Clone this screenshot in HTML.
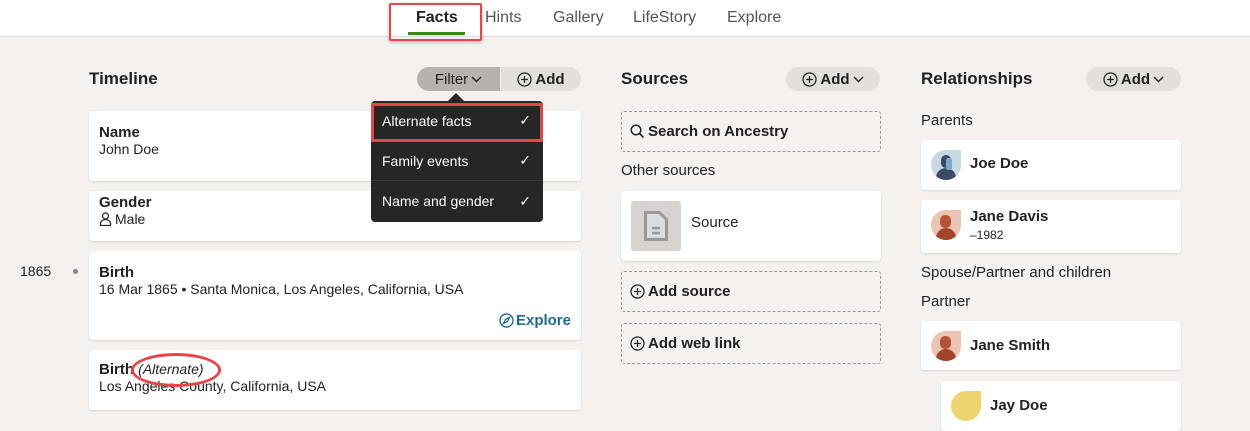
<!DOCTYPE html>
<html><head><style>
*{box-sizing:border-box;margin:0;padding:0}
body{width:1250px;height:418px;overflow:hidden;background:#f4f1ee;font-family:"Liberation Sans",sans-serif;color:#222;position:relative}
.a{position:absolute}
.nav{left:0;top:0;width:1250px;height:37px;background:#fff;border-bottom:1px solid #ddd}
.nav span{position:absolute;top:9px;font-size:16px;color:#555}
.card{position:absolute;background:#fff;border-radius:4px;box-shadow:0 1px 2px rgba(0,0,0,.12)}
.h{font-size:17px;font-weight:bold;color:#222}
.t{font-size:15px;font-weight:bold}
.s{font-size:14px}
.dash{position:absolute;border:1px dashed #999;border-radius:3px;font-size:15px;font-weight:bold;padding:0 8px;display:flex;align-items:center;gap:3px}
.pill{position:absolute;background:#e3e0dc;border-radius:13px;height:24px;font-size:15px;font-weight:bold;display:flex;align-items:center;justify-content:center;gap:3px}
.dd{left:371px;top:101px;width:172px;height:121px;background:#262626;border-radius:4px;color:#fff;font-size:14px}
.dd div{height:40px;display:flex;align-items:center;justify-content:space-between;padding:0 12px 0 11px;border-bottom:1px solid #3a3a3a}
.av{position:absolute;width:30px;height:30px;border-radius:15px 0 15px 15px;overflow:hidden}
svg{display:block}
</style></head><body>
<div class="a nav">
<span style="left:416px;font-weight:bold;color:#222">Facts</span>
<span style="left:485px">Hints</span>
<span style="left:553px">Gallery</span>
<span style="left:633px">LifeStory</span>
<span style="left:727px">Explore</span>
<div class="a" style="left:408px;top:32px;width:57px;height:3px;background:#3a8a10"></div>
</div>
<div class="a" style="left:389px;top:3px;width:93px;height:38px;border:2px solid #e8454a;border-radius:2px;box-shadow:0 1px 3px rgba(0,0,0,.3)"></div>

<div class="a h" style="left:89px;top:69px">Timeline</div>
<div class="pill" style="left:417px;top:67px;width:83px;background:#b7b2ad;border-radius:13px 0 0 13px;font-weight:normal;color:#222">Filter<svg width="11" height="7" viewBox="0 0 11 7"><path d="M1 1l4.5 4.5L10 1" fill="none" stroke="#222" stroke-width="1.4"/></svg></div>
<div class="pill" style="left:501px;top:67px;width:80px;border-radius:0 13px 13px 0"><svg width="15" height="15" viewBox="0 0 15 15"><circle cx="7.5" cy="7.5" r="6.5" fill="none" stroke="#222" stroke-width="1.3"/><path d="M7.5 4v7M4 7.5h7" stroke="#222" stroke-width="1.3"/></svg>Add</div>

<div class="card" style="left:89px;top:111px;width:492px;height:70px;padding:13px 10px"><div class="t">Name</div><div class="s">John Doe</div></div>
<div class="card" style="left:89px;top:191px;width:492px;height:50px;padding:3px 10px"><div class="t">Gender</div><div class="s" style="display:flex;align-items:center;gap:3px"><svg width="13" height="14" viewBox="0 0 13 14"><circle cx="6.5" cy="4" r="3" fill="none" stroke="#222" stroke-width="1.2"/><path d="M1.5 13.5v-2a5 4 0 0 1 10 0v2z" fill="none" stroke="#222" stroke-width="1.2"/></svg>Male</div></div>
<div class="a s" style="left:20px;top:263px;font-size:14px">1865</div>
<div class="a" style="left:73px;top:269px;width:5px;height:5px;border-radius:3px;background:#888"></div>
<div class="card" style="left:89px;top:251px;width:492px;height:89px;padding:13px 10px"><div class="t">Birth</div><div class="s">16 Mar 1865 • Santa Monica, Los Angeles, California, USA</div>
<div class="a" style="right:10px;top:61px;color:#1a6f8f;font-size:15px;font-weight:bold;display:flex;align-items:center;gap:2px"><svg width="15" height="15" viewBox="0 0 15 15"><circle cx="7.5" cy="7.5" r="6.5" fill="none" stroke="#1a6f8f" stroke-width="1.4"/><path d="M10.5 4.5L8.5 8.5 4.5 10.5 6.5 6.5z" fill="none" stroke="#1a6f8f" stroke-width="1.3"/></svg>Explore</div></div>
<div class="card" style="left:89px;top:350px;width:492px;height:60px;padding:11px 10px"><div class="t">Birth <i style="font-weight:normal;font-size:14px">(Alternate)</i></div><div class="s">Los Angeles County, California, USA</div></div>
<div class="a" style="left:131px;top:353px;width:90px;height:34px;border:3px solid #e8454a;border-radius:50%"></div>

<div class="a" style="left:448px;top:93px;border:8px solid transparent;border-bottom-color:#262626;border-top:0"></div>
<div class="a dd"><div>Alternate facts<span>✓</span></div><div>Family events<span>✓</span></div><div style="border:0">Name and gender<span>✓</span></div></div>
<div class="a" style="left:371px;top:103px;width:172px;height:39px;border:3px solid #e8454a"></div>

<div class="a h" style="left:621px;top:69px">Sources</div>
<div class="pill" style="left:786px;top:67px;width:94px"><svg width="15" height="15" viewBox="0 0 15 15"><circle cx="7.5" cy="7.5" r="6.5" fill="none" stroke="#222" stroke-width="1.3"/><path d="M7.5 4v7M4 7.5h7" stroke="#222" stroke-width="1.3"/></svg>Add<svg width="11" height="7" viewBox="0 0 11 7"><path d="M1 1l4.5 4.5L10 1" fill="none" stroke="#222" stroke-width="1.4"/></svg></div>
<div class="dash" style="left:621px;top:111px;width:260px;height:41px"><svg width="15" height="15" viewBox="0 0 15 15"><circle cx="6" cy="6" r="4.8" fill="none" stroke="#222" stroke-width="1.5"/><path d="M9.5 9.5l4 4" stroke="#222" stroke-width="1.6"/></svg>Search on Ancestry</div>
<div class="a s" style="left:621px;top:162px;font-size:15px">Other sources</div>
<div class="card" style="left:621px;top:191px;width:260px;height:70px">
<div class="a" style="left:10px;top:10px;width:50px;height:50px;background:#d6d3d0;border-radius:3px"><svg class="a" style="left:13px;top:10px" width="24" height="30" viewBox="0 0 24 30"><path d="M1.5 1.5h14l7 7v20h-21z" fill="#ddd" stroke="#999" stroke-width="3"/><path d="M8 17h8M8 22h8" stroke="#999" stroke-width="2.5"/></svg></div>
<div class="a" style="left:70px;top:23px;font-size:15px">Source</div></div>
<div class="dash" style="left:621px;top:271px;width:260px;height:41px"><svg width="15" height="15" viewBox="0 0 15 15"><circle cx="7.5" cy="7.5" r="6.5" fill="none" stroke="#222" stroke-width="1.3"/><path d="M7.5 4v7M4 7.5h7" stroke="#222" stroke-width="1.3"/></svg>Add source</div>
<div class="dash" style="left:621px;top:323px;width:260px;height:41px"><svg width="15" height="15" viewBox="0 0 15 15"><circle cx="7.5" cy="7.5" r="6.5" fill="none" stroke="#222" stroke-width="1.3"/><path d="M7.5 4v7M4 7.5h7" stroke="#222" stroke-width="1.3"/></svg>Add web link</div>

<div class="a h" style="left:921px;top:69px">Relationships</div>
<div class="pill" style="left:1086px;top:67px;width:95px"><svg width="15" height="15" viewBox="0 0 15 15"><circle cx="7.5" cy="7.5" r="6.5" fill="none" stroke="#222" stroke-width="1.3"/><path d="M7.5 4v7M4 7.5h7" stroke="#222" stroke-width="1.3"/></svg>Add<svg width="11" height="7" viewBox="0 0 11 7"><path d="M1 1l4.5 4.5L10 1" fill="none" stroke="#222" stroke-width="1.4"/></svg></div>
<div class="a" style="left:921px;top:112px;font-size:15px">Parents</div>
<div class="card" style="left:921px;top:140px;width:260px;height:50px"><div class="av" style="left:10px;top:10px;background:#c7d9e2"><div class="a" style="left:5px;top:18px;width:20px;height:16px;border-radius:10px 10px 0 0;background:#3d4a66"></div><div class="a" style="left:10px;top:5px;width:10px;height:13px;border-radius:5px;background:#3d4a66"></div><div class="a" style="left:15px;top:8px;width:6px;height:12px;background:#7fa8c6;border-radius:2px"></div></div><div class="a t" style="left:49px;top:15px">Joe Doe</div></div>
<div class="card" style="left:921px;top:200px;width:260px;height:53px"><div class="av" style="left:10px;top:10px;background:#edc3b3"><div class="a" style="left:5px;top:18px;width:20px;height:16px;border-radius:10px 10px 0 0;background:#a0452a"></div><div class="a" style="left:9px;top:5px;width:11px;height:13px;border-radius:5px;background:#b35535"></div></div><div class="a t" style="left:49px;top:8px">Jane Davis</div><div class="a" style="left:49px;top:28px;font-size:12px">–1982</div></div>
<div class="a" style="left:921px;top:264px;font-size:15px">Spouse/Partner and children</div>
<div class="a" style="left:921px;top:293px;font-size:15px">Partner</div>
<div class="card" style="left:921px;top:321px;width:260px;height:49px"><div class="av" style="left:10px;top:10px;background:#edc3b3"><div class="a" style="left:5px;top:18px;width:20px;height:16px;border-radius:10px 10px 0 0;background:#a0452a"></div><div class="a" style="left:9px;top:5px;width:11px;height:13px;border-radius:5px;background:#b35535"></div></div><div class="a t" style="left:49px;top:16px">Jane Smith</div></div>
<div class="card" style="left:941px;top:381px;width:240px;height:50px"><div class="av" style="left:10px;top:10px;background:#ecd46e"></div><div class="a t" style="left:49px;top:16px">Jay Doe</div></div>
</body></html>
